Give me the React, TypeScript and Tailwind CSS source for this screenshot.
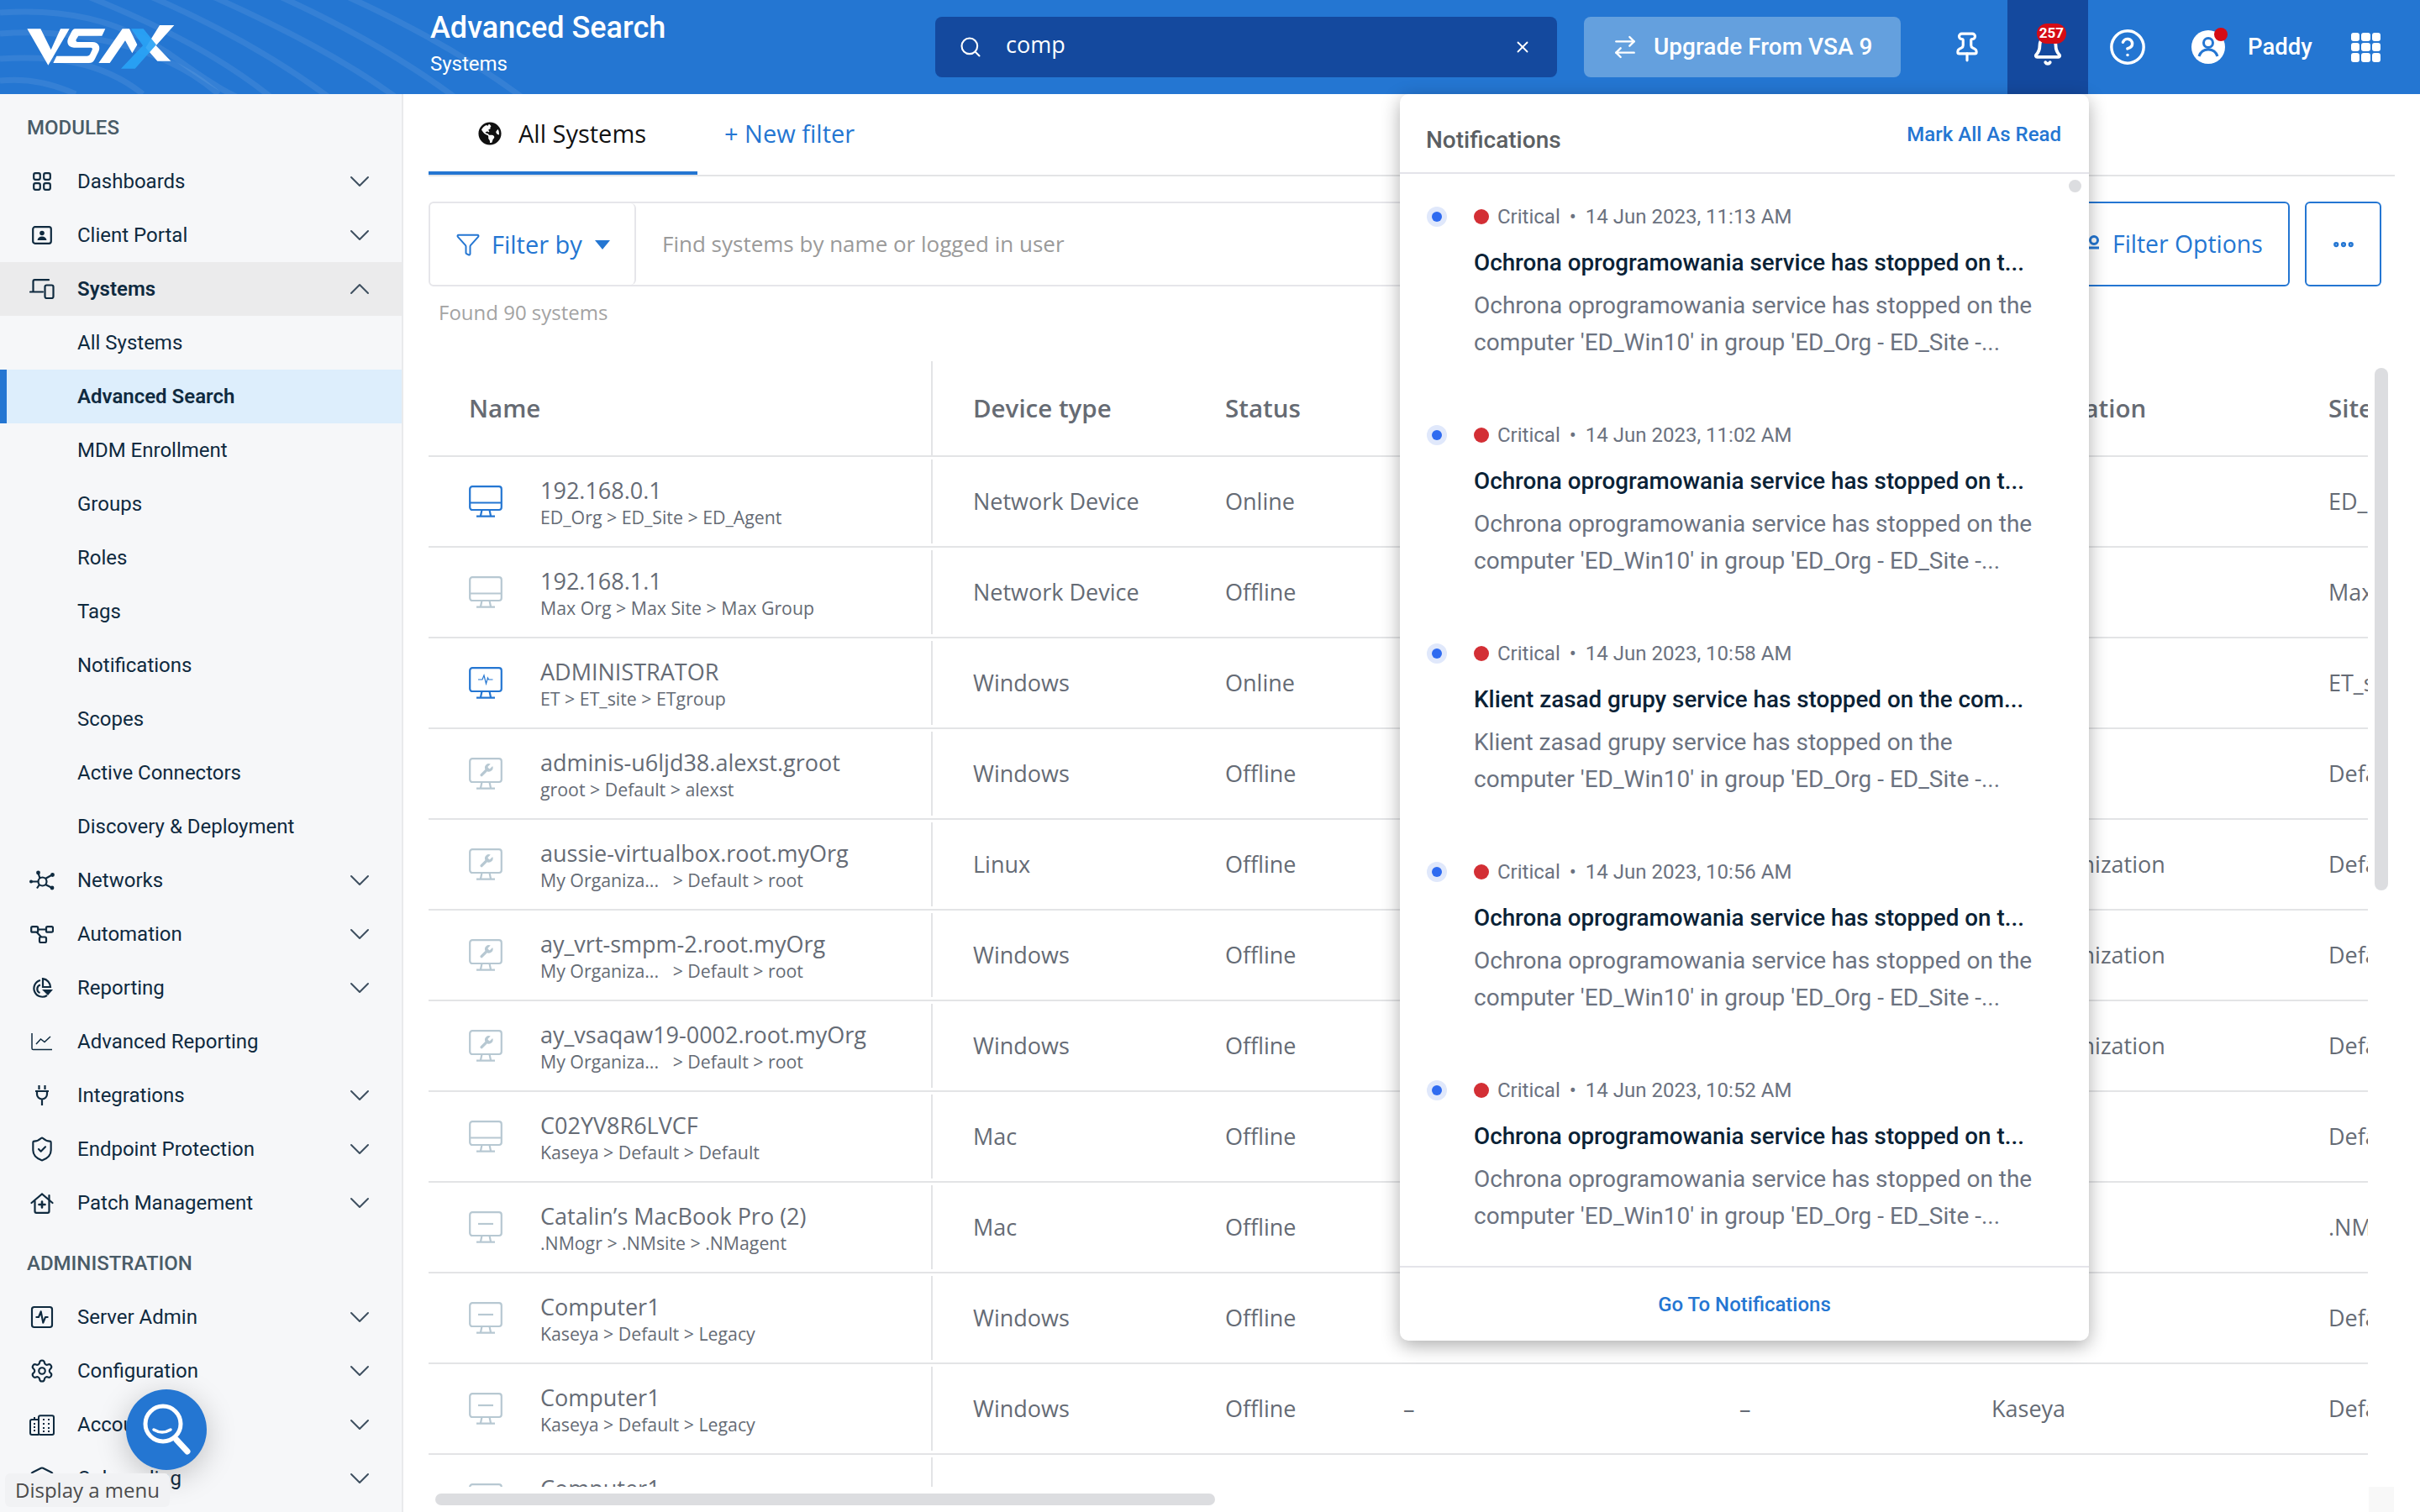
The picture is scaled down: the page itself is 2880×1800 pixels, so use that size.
import {
  ArrowRightLeft,
  Bell,
  ChevronDown,
  ChevronUp,
  CircleHelp,
  Ellipsis,
  Funnel,
  Pin,
  Search,
  Settings,
  ShieldCheck,
  SquareActivity,
  Warehouse,
  X,
} from 'lucide-react';
import { ReactNode } from 'react';
import { FaGlobeAmericas } from 'react-icons/fa';

function DashIcon() {
  return (
    <svg width="22" height="22" viewBox="0 0 22 22" fill="none" stroke="currentColor" strokeWidth="2.2">
      <rect x="1.2" y="1.2" width="7.6" height="7.6" rx="2" />
      <rect x="13.2" y="1.2" width="7.6" height="7.6" rx="2" />
      <rect x="1.2" y="13.2" width="7.6" height="7.6" rx="2" />
      <rect x="13.2" y="13.2" width="7.6" height="7.6" rx="2" />
    </svg>
  );
}

function ClientIcon() {
  return (
    <svg width="24" height="22" viewBox="0 0 24 22" fill="none" stroke="currentColor" strokeWidth="2.2">
      <rect x="1.2" y="1.2" width="21.6" height="19.6" rx="2.5" />
      <circle cx="12" cy="8.5" r="2.8" fill="currentColor" stroke="none" />
      <path d="M6.5 17c.5-3 2.5-4.5 5.5-4.5s5 1.500 5.500 4.500z" fill="currentColor" stroke="none" />
    </svg>
  );
}

function SystemsIcon() {
  return (
    <svg width="30" height="24" viewBox="0 0 30 24" fill="none" stroke="currentColor" strokeWidth="2.2" strokeLinecap="round">
      <path d="M4.500 15V3c0-1 .7-1.800 1.800-1.800H23" />
      <path d="M1 15.500h15" />
      <rect x="18.500" y="7.500" width="10" height="15.500" rx="2" />
    </svg>
  );
}

function NetIcon() {
  return (
    <svg width="30" height="24" viewBox="0 0 30 24" fill="none" stroke="currentColor" strokeWidth="2.2">
      <circle cx="15.500" cy="13.500" r="5" />
      <path d="m12.500 9.500-2-6M19 10l8-4.500M10.500 13.500H2M19 17l8 4M12 17l-3 4.500" />
      <circle cx="10.500" cy="3" r="2.400" fill="currentColor" stroke="none" />
      <circle cx="27.500" cy="5.500" r="2.400" fill="currentColor" stroke="none" />
      <circle cx="2" cy="13.500" r="2" fill="currentColor" stroke="none" />
      <circle cx="27" cy="21" r="2.400" fill="currentColor" stroke="none" />
    </svg>
  );
}

function AutoIcon() {
  return (
    <svg width="28" height="21" viewBox="0 0 28 21" fill="none" stroke="currentColor" strokeWidth="2.2">
      <rect x="1.200" y="1.200" width="8" height="6.500" rx="1.500" />
      <rect x="19" y="1.200" width="8" height="6.500" rx="1.500" />
      <rect x="11" y="13.500" width="8" height="6.500" rx="1.500" />
      <path d="M9 4.500h10M7.500 7.500l5.500 6" />
    </svg>
  );
}

function ReportIcon() {
  return (
    <svg width="28" height="24" viewBox="0 0 28 24" fill="none" stroke="currentColor" strokeWidth="2.2">
      <path d="M12 3A10 10 0 1 0 20 21" />
      <path d="M12 8.500A5 5 0 0 0 11.500 18" />
      <path d="M15 1.200a10 10 0 0 1 9 9.800h-9z" />
      <path d="M14 14h13l-6 7z" fill="currentColor" stroke="none" />
    </svg>
  );
}

function ChartIcon() {
  return (
    <svg width="26" height="22" viewBox="0 0 26 22" fill="none" stroke="currentColor" strokeWidth="1.500">
      <path d="M1 1v18c0 1 .6 1.600 1.600 1.600H25" />
      <path d="m6 14 5.500-6 4.500 3.500L23 5" />
    </svg>
  );
}

function PlugIcon() {
  return (
    <svg width="18" height="24" viewBox="0 0 18 24" fill="none" stroke="currentColor" strokeWidth="2.2">
      <path d="M5.500 0v5M12.500 0v5M1 7h16M3 7v3.500a6 6 0 0 0 12 0V7M9 16.500V24" />
    </svg>
  );
}

function PatchIcon() {
  return (
    <svg width="28" height="25" viewBox="0 0 28 25" fill="none" stroke="currentColor" strokeWidth="2.2" strokeLinecap="round">
      <path d="M1.500 12 14 1.500 26.500 12" />
      <path d="M5.500 10v12c0 1 .6 1.800 1.800 1.800h13.400c1.200 0 1.800-.8 1.800-1.800V3" />
      <path d="M14 10.500v7M10.500 14h7" strokeWidth="2.600" />
    </svg>
  );
}

function AccountsIcon() {
  return (
    <svg width="30" height="25" viewBox="0 0 30 25" fill="none" stroke="currentColor" strokeWidth="2">
      <path d="M11 24H3c-1.200 0-2-.8-2-2V8c0-1.200.8-2 2-2h8" />
      <path d="M6 3v3" />
      <rect x="11" y="1.200" width="18" height="22.800" rx="2" />
      <path d="M5 11h2M5 15h2M5 19h2M16 6h2M22 6h2M16 11h2M22 11h2M16 16h2M22 16h2M16 20h2M22 20h2" />
    </svg>
  );
}

type NavItem = { label: string; icon?: ReactNode; open?: boolean; active?: boolean; bold?: boolean; sub?: boolean; leaf?: boolean };

const modules: NavItem[] = [
  { label: 'Dashboards', icon: <DashIcon /> },
  { label: 'Client Portal', icon: <ClientIcon /> },
  { label: 'Systems', icon: <SystemsIcon />, open: true, bold: true },
  { label: 'All Systems', sub: true },
  { label: 'Advanced Search', sub: true, active: true, bold: true },
  { label: 'MDM Enrollment', sub: true },
  { label: 'Groups', sub: true },
  { label: 'Roles', sub: true },
  { label: 'Tags', sub: true },
  { label: 'Notifications', sub: true },
  { label: 'Scopes', sub: true },
  { label: 'Active Connectors', sub: true },
  { label: 'Discovery & Deployment', sub: true },
  { label: 'Networks', icon: <NetIcon /> },
  { label: 'Automation', icon: <AutoIcon /> },
  { label: 'Reporting', icon: <ReportIcon /> },
  { label: 'Advanced Reporting', icon: <ChartIcon />, leaf: true },
  { label: 'Integrations', icon: <PlugIcon /> },
  { label: 'Endpoint Protection', icon: <ShieldCheck size={32} strokeWidth={1.6} /> },
  { label: 'Patch Management', icon: <PatchIcon /> },
];

const admin: NavItem[] = [
  { label: 'Server Admin', icon: <SquareActivity size={32} strokeWidth={1.6} /> },
  { label: 'Configuration', icon: <Settings size={30} strokeWidth={1.7} /> },
  { label: 'Accounts', icon: <AccountsIcon /> },
  { label: 'Onboarding', icon: <Warehouse size={30} strokeWidth={1.7} /> },
];

function NavRow({ item }: { item: NavItem }) {
  return (
    <div
      className={`h-16 shrink-0 flex items-center text-[24px] text-[#0f2a3f] ${item.bold ? 'font-semibold' : ''} ${
        item.active ? 'bg-[#ddeefc] border-l-8 border-[#2476d2] pl-[84px]' : item.sub ? 'pl-[92px]' : 'pl-[32px]'
      } ${item.open ? 'bg-[#ebebec]' : ''}`}
    >
      {item.icon && <span className="w-[36px] h-[36px] mr-[24px] flex items-center justify-center">{item.icon}</span>}
      <span className="flex-1">{item.label}</span>
      {!item.sub &&
        !item.leaf &&
        (item.open ? (
          <ChevronUp size={40} strokeWidth={1.2} className="mr-[30px] text-[#3f5060]" />
        ) : (
          <ChevronDown size={40} strokeWidth={1.2} className="mr-[30px] text-[#3f5060]" />
        ))}
    </div>
  );
}

function SectionLabel({ children }: { children: string }) {
  return (
    <div className="h-[72px] pt-[8px] pl-[32px] shrink-0 flex items-center text-[24px] font-medium text-[#4a5c68]">
      {children}
    </div>
  );
}

function Sidebar() {
  return (
    <aside className="w-[480px] shrink-0 h-full overflow-hidden flex flex-col bg-[#f6f7f9] border-r-2 border-[#e9eaec]">
      <SectionLabel>MODULES</SectionLabel>
      {modules.map((m) => (
        <NavRow key={m.label} item={m} />
      ))}
      <SectionLabel>ADMINISTRATION</SectionLabel>
      {admin.map((m) => (
        <NavRow key={m.label} item={m} />
      ))}
    </aside>
  );
}

function Logo() {
  return (
    <svg width="260" height="112" viewBox="0 0 780 336" className="shrink-0">
      <g fill="#fff">
        <polygon points="97,103 145,103 182,178 216,103 248,103 172,233" />
        <path d="M268 103H376L364 128H280L272 141C270 146 272 150 278 150H330C352 150 360 168 352 184L338 212C334 220 328 225 318 225H190L202 200H310C316 200 320 197 322 193L329 178C331 174 329 170 324 170H264C244 170 236 152 244 136L254 116C258 108 262 103 268 103Z" />
        <polygon points="352,225 437,103 462,103 490,160 472,190 447,145 392,225" />
        <polygon points="570,90 622,90 557,163 610,218 562,218 520,170" />
      </g>
      <polygon points="468,103 512,103 558,160 482,245 432,245 510,163" fill="#29a3f5" opacity="0.92" />
    </svg>
  );
}

function HeaderWaves() {
  return (
    <svg width="1300" height="112" viewBox="0 0 1300 112" fill="none" stroke="#fff" strokeOpacity="0.08" strokeWidth="7" className="absolute left-0 top-0">
      <path d="M0 15C70 10 140 20 210 70S280 112 300 125" />
      <path d="M0 40C80 34 190 50 260 112" />
      <path d="M0 70C60 66 120 72 170 112" />
      <path d="M0 96C30 93 60 98 90 112" />
      <path d="M100 -6C190 30 270 70 340 130" />
      <path d="M170 -8C260 30 340 75 410 130" />
      <path d="M240 -10C330 30 420 75 490 130" />
      <path d="M320 -10C410 30 490 75 560 130" />
      <path d="M400 -10C490 30 570 75 640 130" />
    </svg>
  );
}

function Header() {
  return (
    <header className="relative h-[112px] shrink-0 flex items-center bg-[#2476d2] text-white">
      <HeaderWaves />
      <div className="relative w-[512px] h-full shrink-0">
        <Logo />
      </div>
      <div className="relative w-[601px] shrink-0 flex flex-col">
        <span className="text-[36px] leading-[42px] font-medium -mt-[10px]">Advanced Search</span>
        <span className="text-[24px] leading-[30px] mt-[7px]">Systems</span>
      </div>
      <div className="relative w-[740px] h-[72px] shrink-0 rounded-lg bg-[#14499e] flex items-center pl-[28px] pr-[30px]">
        <Search size={28} strokeWidth={1.8} />
        <span className="ml-[28px] flex-1 text-[27px] font-['Open_Sans',sans-serif] -mt-[6px]">comp</span>
        <X size={22} strokeWidth={2} />
      </div>
      <div className="relative w-[377px] h-[72px] ml-[32px] shrink-0 rounded-lg bg-[#64a0de] flex items-center pl-[33px]">
        <ArrowRightLeft size={32} strokeWidth={1.8} />
        <span className="ml-[18px] text-[28px] font-medium">Upgrade From VSA 9</span>
      </div>
      <Pin size={38} strokeWidth={2} className="relative ml-[60px] mr-[29px] shrink-0" />
      <div className="relative w-[96px] h-full shrink-0 bg-[#14499e] flex items-center justify-center">
        <Bell size={38} strokeWidth={2.4} className="mt-[8px]" />
        <span className="absolute left-[35px] top-[28px] w-[35px] h-[24px] rounded-full bg-[#d50c15] flex items-center justify-center text-[17px] font-bold">
          257
        </span>
      </div>
      <CircleHelp size={46} strokeWidth={1.8} className="relative ml-[24px] shrink-0" />
      <div className="relative ml-[53px] w-[40px] h-[40px] shrink-0 rounded-full bg-white flex items-center justify-center overflow-visible">
        <svg width="40" height="40" viewBox="0 0 40 40" fill="none" stroke="#2476d2" strokeWidth="3">
          <circle cx="20" cy="15" r="5.5" />
          <path d="M9 31c2-6 6-8 11-8s9 2 11 8" />
        </svg>
        <span className="absolute -right-[3px] -top-[3px] w-[16px] h-[16px] rounded-full bg-[#d50c15]" />
      </div>
      <span className="relative ml-[27px] text-[27.500px] font-medium">Paddy</span>
      <div className="relative ml-auto mr-[47px] w-[35px] h-[35px] grid grid-cols-3 gap-[2px]">
        {Array.from({ length: 9 }).map((_, i) => (
          <span key={i} className="rounded-[3px] bg-white" />
        ))}
      </div>
    </header>
  );
}

function Monitor({ kind, blue }: { kind: 'bar' | 'pulse' | 'wrench' | 'minus'; blue?: boolean }) {
  return (
    <svg width="40" height="38" viewBox="0 0 40 38" fill="none" stroke={blue ? '#2476d2' : '#b7c8d2'} strokeWidth="2.2" className="shrink-0">
      <rect x="1.2" y="1.2" width="37.6" height="27.8" rx="3" />
      <path d="M15.5 29 14 36M24.5 29 26 36M9 36.6h22" />
      {kind === 'bar' && <path d="M1 20.5h38" />}
      {kind === 'pulse' && <path d="M11 15h5l2-5 2.5 10 2-7 1 2h5" strokeWidth="1.2" />}
      {kind === 'minus' && <path d="M11 15h18" />}
      {kind === 'wrench' && (
        <path
          transform="translate(11 5.5) scale(0.8)"
          fill="#b7c8d2"
          stroke="none"
          d="M14.7 6.3a1 1 0 0 0 0 1.4l1.6 1.6a1 1 0 0 0 1.4 0l3.77-3.77a6 6 0 0 1-7.94 7.94l-6.91 6.91a2.12 2.12 0 0 1-3-3l6.91-6.91a6 6 0 0 1 7.94-7.94l-3.76 3.76z"
        />
      )}
    </svg>
  );
}

type Row = {
  name: string;
  path: string;
  device: string;
  status: string;
  org?: string;
  site: string;
  dash?: boolean;
  kind: 'bar' | 'pulse' | 'wrench' | 'minus';
  blue?: boolean;
};

const rows: Row[] = [
  { name: '192.168.0.1', path: 'ED_Org > ED_Site > ED_Agent', device: 'Network Device', status: 'Online', site: 'ED_Site', kind: 'bar', blue: true },
  { name: '192.168.1.1', path: 'Max Org > Max Site > Max Group', device: 'Network Device', status: 'Offline', site: 'Max Site', kind: 'bar' },
  { name: 'ADMINISTRATOR', path: 'ET > ET_site > ETgroup', device: 'Windows', status: 'Online', site: 'ET_site', kind: 'pulse', blue: true },
  { name: 'adminis-u6ljd38.alexst.groot', path: 'groot > Default > alexst', device: 'Windows', status: 'Offline', site: 'Default', kind: 'wrench' },
  { name: 'aussie-virtualbox.root.myOrg', path: 'My Organiza...   > Default > root', device: 'Linux', status: 'Offline', org: 'My Organization', site: 'Default', kind: 'wrench' },
  { name: 'ay_vrt-smpm-2.root.myOrg', path: 'My Organiza...   > Default > root', device: 'Windows', status: 'Offline', org: 'My Organization', site: 'Default', kind: 'wrench' },
  { name: 'ay_vsaqaw19-0002.root.myOrg', path: 'My Organiza...   > Default > root', device: 'Windows', status: 'Offline', org: 'My Organization', site: 'Default', kind: 'wrench' },
  { name: 'C02YV8R6LVCF', path: 'Kaseya > Default > Default', device: 'Mac', status: 'Offline', site: 'Default', kind: 'bar' },
  { name: 'Catalin’s MacBook Pro (2)', path: '.NMogr > .NMsite > .NMagent', device: 'Mac', status: 'Offline', site: '.NMsite', kind: 'minus' },
  { name: 'Computer1', path: 'Kaseya > Default > Legacy', device: 'Windows', status: 'Offline', site: 'Default', kind: 'minus' },
  { name: 'Computer1', path: 'Kaseya > Default > Legacy', device: 'Windows', status: 'Offline', org: 'Kaseya', site: 'Default', dash: true, kind: 'minus' },
  { name: 'Computer1', path: 'Kaseya > Default > Legacy', device: 'Windows', status: 'Offline', org: 'Kaseya', site: 'Default', dash: true, kind: 'minus' },
];

function Table() {
  return (
    <div className="w-[2308px] flex-1 min-h-0 overflow-hidden font-['Open_Sans',sans-serif] text-[#656b75]">
      <div className="w-[2600px] h-[114px] flex items-center border-b-2 border-[#e3e4e6] text-[29.5px] font-semibold text-[#666b73]">
        <div className="w-[600px] h-full flex items-center pl-[48px] border-r-2 border-[#e3e4e6]">Name</div>
        <div className="w-[348px] pl-[48px]">Device type</div>
        <div className="w-[912px]">Status</div>
        <div className="w-[401px]">Organization</div>
        <div className="w-[200px]">Site</div>
      </div>
      {rows.map((r, i) => (
        <div key={i} className="w-[2600px] h-[108px] flex items-center border-b-2 border-[#e3e4e6] text-[27px]">
          <div className="w-[600px] h-[100px] flex items-center pl-[48px] border-r-2 border-[#e3e4e6]">
            <Monitor kind={r.kind} blue={r.blue} />
            <div className="ml-[45px] flex flex-col whitespace-pre">
              <span className="leading-[38px]">{r.name}</span>
              <span className="leading-[28px] text-[21.3px] -mt-[1px]">{r.path}</span>
            </div>
          </div>
          <div className="w-[348px] pl-[48px]">{r.device}</div>
          <div className="w-[212px]">{r.status}</div>
          <div className="w-[400px]">{r.dash ? '–' : ''}</div>
          <div className="w-[300px]">{r.dash ? '–' : ''}</div>
          <div className="w-[401px]">{r.org}</div>
          <div className="w-[200px]">{r.site}</div>
        </div>
      ))}
    </div>
  );
}

function Main() {
  return (
    <main className="relative flex-1 h-full flex flex-col pl-[30px] bg-white">
      <div className="w-[2340px] h-[98px] shrink-0 flex items-start border-b-2 border-[#e3e4e6] font-['Open_Sans',sans-serif]">
        <div className="w-[320px] h-[96px] flex items-center pl-[59px] pt-[2px] border-b-4 border-[#2476d2] text-[29px] font-medium text-[#111]">
          <FaGlobeAmericas size={28} />
          <span className="ml-[20px]">All Systems</span>
        </div>
        <div className="ml-[32px] h-[92px] pt-[2px] flex items-center text-[29px] font-medium text-[#2476d2]">+ New filter</div>
      </div>
      <div className="mt-[30px] w-[2324px] h-[101px] shrink-0 flex font-['Open_Sans',sans-serif]">
        <div className="flex-1 flex border-2 border-[#e6e6ea] rounded-md">
          <div className="w-[245px] h-full flex items-center pl-[30px] border-r-2 border-[#e6e6ea] rounded-r-md text-[#2476d2] text-[29px]">
            <Funnel size={30} strokeWidth={1.6} />
            <span className="ml-[13px]">Filter by</span>
            <svg width="20" height="14" viewBox="0 0 20 14" className="ml-[14px]" fill="#2476d2">
              <path d="M1 2h18L10 13z" />
            </svg>
          </div>
          <div className="pl-[31px] flex items-center text-[26px] text-[#9a9a9a]">Find systems by name or logged in user</div>
        </div>
        <button className="ml-[18px] w-[295px] h-full shrink-0 border-2 border-[#2476d2] rounded-md flex items-center pl-[35px] text-[#2476d2] text-[28.4px]">
          <svg width="32" height="24" viewBox="0 0 32 24" fill="none" stroke="#2476d2" strokeWidth="3" className="shrink-0">
            <circle cx="25" cy="7" r="4.5" />
            <path d="M4 16h27" />
          </svg>
          <span className="ml-[15px] whitespace-nowrap">Filter Options</span>
        </button>
        <button className="ml-[18px] w-[91px] h-full shrink-0 border-2 border-[#2476d2] rounded-md flex items-center justify-center text-[#2476d2]">
          <Ellipsis size={30} strokeWidth={3} />
        </button>
      </div>
      <div className="mt-[16px] h-[30px] shrink-0 pl-[12px] flex items-center text-[24px] text-[#a3a3a3] font-['Open_Sans',sans-serif]">
        Found 90 systems
      </div>
      <div className="mt-[43px] flex-1 min-h-0 mb-[30px] flex flex-col">
        <Table />
      </div>
      <span className="absolute left-[2346px] top-[326px] w-[16px] h-[622px] rounded-full bg-[#dcdde0]" />
      <span className="absolute left-[38px] top-[1666px] w-[928px] h-[14px] rounded-full bg-[#dcdde0]" />
      <span className="absolute left-[2339px] top-[1658px] w-[30px] h-[30px] bg-[#f8f8f8]" />
    </main>
  );
}

const notes = [
  { time: '11:13 AM', title: 'Ochrona oprogramowania service has stopped on t...', body: 'Ochrona oprogramowania service has stopped on the' },
  { time: '11:02 AM', title: 'Ochrona oprogramowania service has stopped on t...', body: 'Ochrona oprogramowania service has stopped on the' },
  { time: '10:58 AM', title: 'Klient zasad grupy service has stopped on the com...', body: 'Klient zasad grupy service has stopped on the' },
  { time: '10:56 AM', title: 'Ochrona oprogramowania service has stopped on t...', body: 'Ochrona oprogramowania service has stopped on the' },
  { time: '10:52 AM', title: 'Ochrona oprogramowania service has stopped on t...', body: 'Ochrona oprogramowania service has stopped on the' },
];

function NotificationsPanel() {
  return (
    <div className="absolute left-[1666px] top-[112px] w-[820px] h-[1484px] z-20 bg-white rounded-[10px] shadow-[0_6px_22px_rgba(0,0,0,0.32)] flex flex-col">
      <div className="h-[95px] shrink-0 flex border-b-2 border-[#e4e4ea] pl-[31px] pr-[33px]">
        <span className="mt-[39px] text-[28px] leading-[32px] font-medium text-[#5b5f63]">Notifications</span>
        <span className="ml-auto mt-[32px] text-[24px] leading-[32px] font-medium text-[#2476d2]">Mark All As Read</span>
      </div>
      <div className="relative flex-1 flex flex-col">
        <span className="absolute right-[9px] top-[7px] w-[15px] h-[15px] rounded-full bg-[#dcdde0]" />
        {notes.map((n, i) => (
          <div key={i} className="h-[260px] shrink-0 flex pl-[32px] pt-[36px]">
            <span className="w-[24px] h-[24px] mt-[3px] rounded-full bg-[#e0e8fb] flex items-center justify-center shrink-0">
              <span className="w-[12px] h-[12px] rounded-full bg-[#2f6bf0]" />
            </span>
            <div className="ml-[32px] flex flex-col">
              <div className="h-[30px] flex items-center text-[24px] text-[#6b7280] whitespace-pre">
                <span className="w-[18px] h-[18px] rounded-full bg-[#d32f35] mr-[10px]" />
                <span>Critical</span>
                <span className="mx-[11px]">•</span>
                <span>14 Jun 2023, {n.time}</span>
              </div>
              <div className="mt-[17px] h-[46px] flex items-center text-[27.8px] font-medium text-[#0a2236] whitespace-nowrap">{n.title}</div>
              <div className="mt-[6px] text-[28px] leading-[44px] text-[#6b7280] whitespace-nowrap">
                <div>{n.body}</div>
                <div>computer 'ED_Win10' in group 'ED_Org - ED_Site -...</div>
              </div>
            </div>
          </div>
        ))}
      </div>
      <div className="h-[89px] shrink-0 border-t-2 border-[#e4e4ea] flex items-center justify-center text-[24px] font-medium text-[#2476d2]">
        Go To Notifications
      </div>
    </div>
  );
}

export default function App() {
  return (
    <div className="relative w-[2880px] h-[1800px] overflow-hidden flex flex-col bg-white font-['Roboto',sans-serif]">
      <Header />
      <div className="flex-1 min-h-0 flex">
        <Sidebar />
        <Main />
      </div>
      <NotificationsPanel />
      <div className="absolute left-[150px] top-[1654px] w-[96px] h-[96px] z-30 rounded-full bg-[#2476d2] shadow-[0_8px_36px_rgba(0,0,0,0.22)]">
        <svg width="96" height="96" viewBox="0 0 96 96" fill="none" stroke="#fff" strokeLinecap="round">
          <circle cx="44" cy="41" r="21" strokeWidth="5" />
          <path d="M60 60 73 74" strokeWidth="7" />
          <path d="M33 48Q43 54 53 48" strokeWidth="3.5" />
        </svg>
      </div>
      <div className="absolute left-[6px] top-[1754px] z-40 w-[196px] h-[40px] rounded-md bg-[#f1f2f4] flex items-center pl-[12px] text-[24px] text-[#4b4b4b] font-['Open_Sans',sans-serif]">
        Display a menu
      </div>
    </div>
  );
}
